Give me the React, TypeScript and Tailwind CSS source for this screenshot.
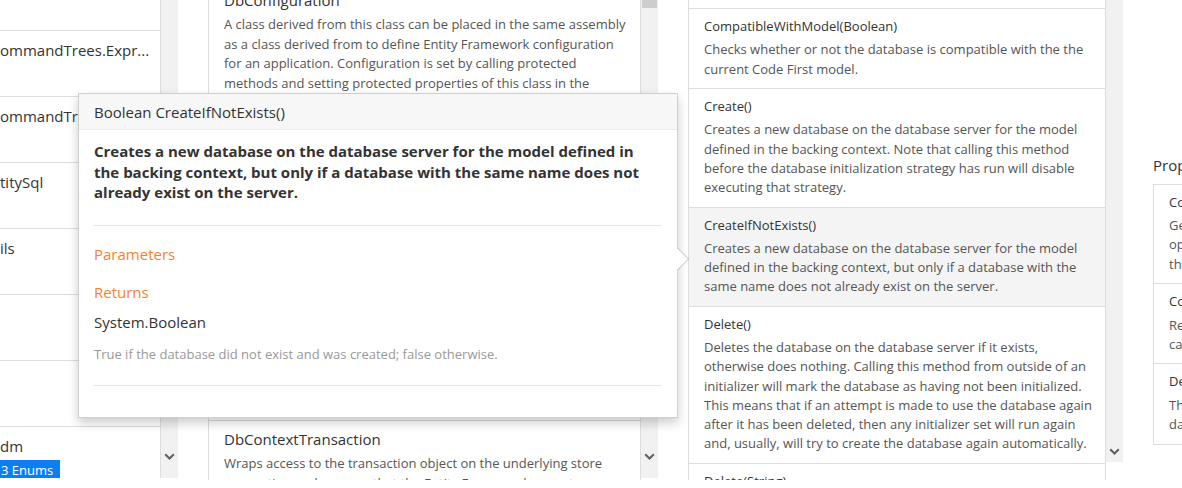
import type { FC } from "react"

type Member = { title: string; lines: string[]; active?: boolean; tight?: boolean }

const namespaces = [
  { text: "" },
  { text: "ommandTrees.Expr..." },
  { text: "ommandTrees" },
  { text: "titySql" },
  { text: "ils" },
  { text: "" },
  { text: "" },
  { text: "dm", badge: "3 Enums" },
]

const types: Member[] = [
  {
    title: "DbConfiguration",
    lines: [
      "A class derived from this class can be placed in the same assembly",
      "as a class derived from to define Entity Framework configuration",
      "for an application. Configuration is set by calling protected",
      "methods and setting protected properties of this class in the",
      "constructor of the derived type. The type to use can also be",
      "registered in the config file of the application.",
    ],
  },
  {
    title: "DbConfigurationTypeAttribute",
    lines: [
      "This attribute can be placed on a subclass of DbContext to indicate",
      "that a subclass of DbConfiguration should be used.",
    ],
  },
  {
    title: "DbContext",
    tight: true,
    lines: [
      "A DbContext instance represents a combination of the Unit Of Work",
      "and Repository patterns such that it can be used to query from a",
      "database and group together changes that will then be written",
      "back to the store as a unit. DbContext is conceptually similar to",
      "ObjectContext. DbContext is usually used with a derived type that",
      "contains DbSet properties for the root entities of the model.",
      "These sets are automatically initialized when the instance of the",
      "derived class is created.",
    ],
  },
  {
    title: "DbContextTransaction",
    lines: [
      "Wraps access to the transaction object on the underlying store",
      "connection and ensures that the Entity Framework executes commands",
    ],
  },
]

const methods: Member[] = [
  {
    title: "BeginTransaction(IsolationLevel)",
    lines: [
      "Begins a transaction on the underlying store connection using the",
      "specified isolation level.",
    ],
  },
  {
    title: "CompatibleWithModel(Boolean)",
    lines: ["Checks whether or not the database is compatible with the the", "current Code First model."],
  },
  {
    title: "Create()",
    lines: [
      "Creates a new database on the database server for the model",
      "defined in the backing context. Note that calling this method",
      "before the database initialization strategy has run will disable",
      "executing that strategy.",
    ],
  },
  {
    title: "CreateIfNotExists()",
    active: true,
    lines: [
      "Creates a new database on the database server for the model",
      "defined in the backing context, but only if a database with the",
      "same name does not already exist on the server.",
    ],
  },
  {
    title: "Delete()",
    lines: [
      "Deletes the database on the database server if it exists,",
      "otherwise does nothing. Calling this method from outside of an",
      "initializer will mark the database as having not been initialized.",
      "This means that if an attempt is made to use the database again",
      "after it has been deleted, then any initializer set will run again",
      "and, usually, will try to create the database again automatically.",
    ],
  },
  {
    title: "Delete(String)",
    lines: ["Deletes the database on the database server if it exists."],
  },
]

const properties: Member[] = [
  {
    title: "CommandTimeout",
    lines: [
      "Gets or sets the timeout value, in seconds, for all context",
      "operations. The default value is null, where null indicates that",
      "the default value of the underlying provider will be used.",
    ],
  },
  {
    title: "Connection",
    lines: [
      "Returns the connection being used by this context. This may",
      "cause the context to be initialized and the connection to be created.",
    ],
  },
  {
    title: "DefaultConnectionFactory",
    lines: [
      "The connection factory to use when creating a DbConnection from just",
      "database name or a connection string.",
    ],
  },
]

const Chevron: FC = () => (
  <svg width="11" height="7" viewBox="0 0 11 7" fill="none">
    <path d="M1.2 1.2l4.3 4.3 4.3-4.3" stroke="#5f5f5f" strokeWidth="2" />
  </svg>
)

const TypeRow: FC<Member> = ({ title, lines, tight }) => (
  <div className={`border-b border-[#dddddd] px-[15px] pt-[8px] ${tight ? "pb-[7px]" : "pb-[9px]"}`}>
    <div className="mb-1 text-[15px] leading-[21px] text-[#333]">{title}</div>
    {lines.map((l) => (
      <div key={l} className="whitespace-nowrap text-[13px] leading-[19.5px] text-[#555]">
        {l}
      </div>
    ))}
  </div>
)

const MethodRow: FC<Member> = ({ title, lines, active }) => (
  <div className={`border-b border-[#dddddd] px-[15px] pt-[8px] pb-[9.5px] ${active ? "bg-[#f4f4f4]" : "bg-white"}`}>
    <div className="mb-1 text-[13px] leading-[19.2px] text-[#333]">{title}</div>
    {lines.map((l) => (
      <div key={l} className="whitespace-nowrap text-[13px] leading-[19.2px] text-[#555]">
        {l}
      </div>
    ))}
  </div>
)

const Popover: FC = () => (
  <div className="absolute left-[78px] top-[93px] w-[600px] border border-[#cfcfcf] bg-white shadow-[0_5px_10px_rgba(0,0,0,0.2)]">
    <div className="border-b border-[#ebebeb] bg-[#f7f7f7] px-[15px] pt-[7.5px] pb-[6.5px] text-[15px] leading-[21px] text-[#333]">
      Boolean CreateIfNotExists()
    </div>
    <div className="px-[15px] pt-[11px] pb-[31px]">
      <p className="text-[15px] font-bold leading-[20.5px] text-[#333]">
        Creates a new database on the database server for the model defined in
        <br />
        the backing context, but only if a database with the same name does not
        <br />
        already exist on the server.
      </p>
      <div className="mt-[22px] border-t border-[#e5e5e5]" />
      <div className="mt-[18px] text-[15px] leading-[21px] text-[#f7822d]">Parameters</div>
      <div className="mt-[17px] text-[15px] leading-[21px] text-[#f7822d]">Returns</div>
      <div className="mt-[9px] text-[15px] leading-[21px] text-[#333]">System.Boolean</div>
      <div className="mt-[12px] text-[13px] leading-[19.5px] text-[#999]">
        True if the database did not exist and was created; false otherwise.
      </div>
      <div className="mt-[21px] border-t border-[#e5e5e5]" />
    </div>
    <svg className="absolute right-[-12px] top-[153px]" width="12" height="24" viewBox="0 0 12 24">
      <path d="M0 0.5L11.5 12L0 23.5Z" fill="white" />
      <path d="M0 0.5L11.5 12L0 23.5" fill="none" stroke="rgba(0,0,0,0.25)" strokeWidth="1" />
    </svg>
  </div>
)

export default function App() {
  return (
    <div className="h-[488px] w-[1182px] overflow-hidden bg-white font-['Open_Sans',sans-serif]">
      <div className="relative flex h-[480px] overflow-hidden">
        {/* namespaces */}
        <div className="flex h-[478px] shrink-0">
          <div className="w-[161px] overflow-hidden border-r border-[#dddddd]">
            <div className="mt-[-35px]">
              {namespaces.map((n, i) => (
                <div key={i} className="h-[66px] border-b border-[#dddddd] pt-[9px]">
                  <div className="whitespace-nowrap text-[15px] leading-[21px] text-[#333]">{n.text}</div>
                  {n.badge && (
                    <span className="inline-block h-[20px] bg-[#0b7ff2] pr-[7px] pl-[1px] text-[13px] leading-[20px] text-white">
                      {n.badge}
                    </span>
                  )}
                </div>
              ))}
            </div>
          </div>
          <div className="flex w-[17px] flex-col items-center justify-end bg-[#f1f1f1] pb-[18px]">
            <Chevron />
          </div>
        </div>

        {/* types */}
        <div className="ml-[30px] flex h-[480px] shrink-0">
          <div className="w-[433px] overflow-hidden border-x border-[#dddddd]">
            <div className="mt-[-18px]">
              {types.map((t) => (
                <TypeRow key={t.title} {...t} />
              ))}
            </div>
          </div>
          <div className="flex h-[478px] w-[17px] flex-col items-center justify-between bg-[#f1f1f1] pb-[18px]">
            <div className="h-[8px] w-[15px] bg-[#cdcdcd]" />
            <Chevron />
          </div>
        </div>

        {/* methods */}
        <div className="ml-[30px] flex h-[480px] shrink-0">
          <div className="w-[418px] overflow-hidden border-x border-[#dddddd]">
            <div className="mt-[-71px]">
              {methods.map((m) => (
                <MethodRow key={m.title} {...m} />
              ))}
            </div>
          </div>
          <div className="flex h-[462px] w-[17px] flex-col items-center justify-end bg-[#f1f1f1] pb-[7px]">
            <Chevron />
          </div>
        </div>

        {/* properties */}
        <div className="ml-[30px] w-[400px] shrink-0 pt-[155px]">
          <div className="mb-[8px] text-[15px] leading-[21px] text-[#333]">Properties</div>
          <div className="border-t border-l border-[#dddddd]">
            {properties.map((p) => (
              <MethodRow key={p.title} {...p} />
            ))}
          </div>
        </div>

        <Popover />
      </div>
    </div>
  )
}
